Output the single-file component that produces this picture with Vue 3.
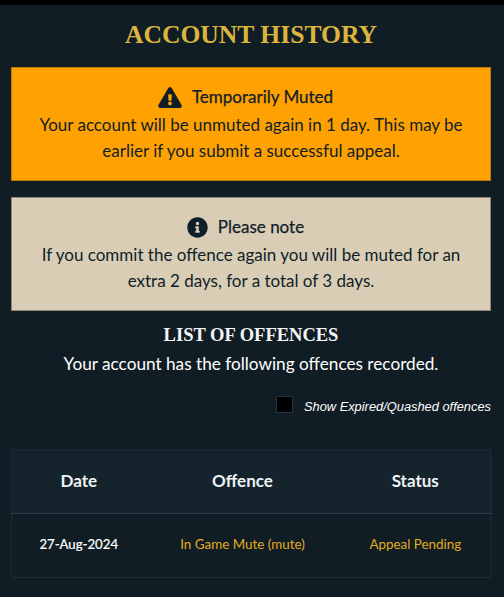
<script setup>
const offences = [
  { date: '27-Aug-2024', offence: 'In Game Mute (mute)', status: 'Appeal Pending' }
]
</script>

<template>
  <div class="page">
    <h1 class="title">ACCOUNT HISTORY</h1>

    <section class="notice notice-warn">
      <div class="notice-head">
        <svg class="icon-warn" viewBox="0 0 576 512" aria-hidden="true">
          <path fill="#0f1e28" d="M569.517 440.013C587.975 472.007 564.806 512 527.94 512H48.054c-36.937 0-59.999-40.055-41.577-71.987L246.423 23.985c18.467-32.009 64.72-31.951 83.154 0l239.94 416.028zM288 354c-25.405 0-46 20.595-46 46s20.595 46 46 46 46-20.595 46-46-20.595-46-46-46zm-43.673-165.346l7.418 136c.347 6.364 5.609 11.346 11.982 11.346h48.546c6.373 0 11.635-4.982 11.982-11.346l7.418-136c.375-6.874-5.098-12.654-11.982-12.654h-63.383c-6.884 0-12.356 5.78-11.981 12.654z"/>
        </svg>
        <span>Temporarily Muted</span>
      </div>
      <p>Your account will be unmuted again in 1 day. This may be earlier if you submit a successful appeal.</p>
    </section>

    <section class="notice notice-info">
      <div class="notice-head">
        <svg class="icon-info" viewBox="0 0 512 512" aria-hidden="true">
          <path fill="#0f1e28" d="M256 8C119.043 8 8 119.083 8 256c0 136.997 111.043 248 248 248s248-111.003 248-248C504 119.083 392.957 8 256 8zm0 110c23.196 0 42 18.804 42 42s-18.804 42-42 42-42-18.804-42-42 18.804-42 42-42zm56 254c0 6.627-5.373 12-12 12h-88c-6.627 0-12-5.373-12-12v-24c0-6.627 5.373-12 12-12h12v-64h-12c-6.627 0-12-5.373-12-12v-24c0-6.627 5.373-12 12-12h64c6.627 0 12 5.373 12 12v100h12c6.627 0 12 5.373 12 12v24z"/>
        </svg>
        <span>Please note</span>
      </div>
      <p>If you commit the offence again you will be muted for an extra 2 days, for a total of 3 days.</p>
    </section>

    <h2 class="subtitle">LIST OF OFFENCES</h2>
    <p class="intro">Your account has the following offences recorded.</p>

    <label class="toggle">
      <span class="box"></span>
      <span class="toggle-text">Show Expired/Quashed offences</span>
    </label>

    <table class="table">
      <colgroup>
        <col class="col-date" />
        <col class="col-offence" />
        <col class="col-status" />
      </colgroup>
      <thead>
        <tr>
          <th>Date</th>
          <th>Offence</th>
          <th>Status</th>
        </tr>
      </thead>
      <tbody>
        <tr v-for="row in offences" :key="row.date">
          <td class="date">{{ row.date }}</td>
          <td class="gold">{{ row.offence }}</td>
          <td class="gold">{{ row.status }}</td>
        </tr>
      </tbody>
    </table>
  </div>
</template>

<style scoped>
.page {
  box-sizing: border-box;
  width: 504px;
  height: 597px;
  overflow: hidden;
  background: #111d24;
  border-top: 5px solid #000;
  padding: 0 13px 0 11px;
  font-family: "Lato", "Noto Sans", sans-serif;
  color: #fff;
}
.title {
  margin: 0;
  height: 62px;
  line-height: 60px;
  text-align: center;
  font-family: "Liberation Serif", serif;
  font-size: 25.6px;
  font-weight: 700;
  color: #dcb53d;
}
.notice {
  box-sizing: border-box;
  height: 114px;
  padding: 14px 24px 0;
  text-align: center;
  color: #0f1e28;
  font-size: 17px;
  line-height: 26px;
}
.notice p {
  margin: 0;
}
.notice-warn {
  background: #ffa100;
  border: 1px solid #bd7b0a;
  margin-bottom: 16px;
}
.notice-info {
  background: #d9cdb6;
  border: 1px solid #8f8875;
}
.notice-head {
  display: flex;
  justify-content: center;
  align-items: center;
  gap: 10px;
  height: 30px;
  padding-right: 11px;
  -webkit-text-stroke: 0.25px #0f1e28;
}
.icon-warn {
  width: 24px;
  height: 21px;
}
.icon-info {
  width: 21px;
  height: 21px;
}
.subtitle {
  margin: 12px 0 0;
  height: 24px;
  line-height: 24px;
  text-align: center;
  font-family: "Liberation Serif", serif;
  font-size: 18.5px;
  font-weight: 700;
  color: #f3f5f7;
}
.intro {
  margin: 5px 0 0;
  height: 24px;
  line-height: 24px;
  text-align: center;
  font-size: 17.2px;
  color: #fff;
}
.toggle {
  display: flex;
  justify-content: flex-end;
  align-items: center;
  gap: 11px;
  margin-top: 19px;
  height: 18px;
}
.box {
  width: 17px;
  height: 17px;
  background: #000;
  border: 1px solid #26333a;
  box-sizing: border-box;
}
.toggle-text {
  font-family: "Liberation Sans", sans-serif;
  font-style: italic;
  font-size: 12.85px;
  line-height: 22px;
  padding-top: 6px;
  color: #fff;
}
.table {
  width: 480px;
  margin-top: 36px;
  border-collapse: collapse;
  table-layout: fixed;
  border: 1px solid #1a2a33;
}
.col-date { width: 134px; }
.col-offence { width: 194px; }
.col-status { width: 152px; }
th {
  box-sizing: border-box;
  height: 64px;
  padding: 0 0 2px;
  background: #15242c;
  border-bottom: 1px solid #2e3f49;
  font-size: 17px;
  font-weight: 700;
  color: #eef3f6;
}
td {
  box-sizing: border-box;
  height: 64px;
  padding: 0 0 3px;
  text-align: center;
  font-size: 13.4px;
  border-bottom: 1px solid #1f2e37;
}
.date {
  color: #fff;
  font-size: 13.2px;
  -webkit-text-stroke: 0.2px #fff;
}
.gold {
  color: #e0ac21;
}
</style>
